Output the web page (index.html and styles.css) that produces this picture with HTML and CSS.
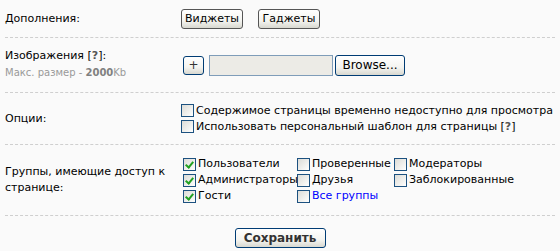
FILE: index.html
```html
<!DOCTYPE html>
<html lang="ru">
<head>
<meta charset="utf-8">
<link rel="stylesheet" href="styles.css">
</head>
<body>
<div class="form">
  <div class="row row-addons">
    <div class="label">Дополнения:</div>
    <div class="field buttons">
      <button class="btn btn-gray">Виджеты</button>
      <button class="btn btn-gray">Гаджеты</button>
    </div>
  </div>
  <div class="row row-images">
    <div class="label">
      <div>Изображения [<b class="q">?</b>]:</div>
      <div class="hint">Макс. размер - <b>2000</b>Kb</div>
    </div>
    <div class="field upload">
      <button class="btn btn-blue btn-plus">+</button>
      <span class="file-input"></span>
      <button class="btn btn-blue btn-browse">Browse...</button>
    </div>
  </div>
  <div class="row row-options">
    <div class="label">Опции:</div>
    <div class="field list">
      <label class="cb"><span class="box"></span>Содержимое страницы временно недоступно для просмотра</label>
      <label class="cb"><span class="box"></span>Использовать персональный шаблон для страницы [<b class="q">?</b>]</label>
    </div>
  </div>
  <div class="row row-groups">
    <div class="label">Группы, имеющие доступ к странице:</div>
    <div class="field groups">
      <label class="cb"><span class="box on"></span>Пользователи</label>
      <label class="cb"><span class="box"></span>Проверенные</label>
      <label class="cb"><span class="box"></span>Модераторы</label>
      <label class="cb"><span class="box on"></span>Администраторы</label>
      <label class="cb"><span class="box"></span>Друзья</label>
      <label class="cb"><span class="box"></span>Заблокированные</label>
      <label class="cb"><span class="box on"></span>Гости</label>
      <label class="cb link"><span class="box"></span>Все группы</label>
    </div>
  </div>
  <div class="row-save">
    <button class="btn btn-blue btn-save">Сохранить</button>
  </div>
</div>
</body>
</html>
```
FILE: styles.css
```css
html, body {
  margin: 0;
  padding: 0;
  background: #fafafa;
}
body {
  font-family: "DejaVu Sans", Verdana, sans-serif;
  font-size: 11px;
  color: #000;
}
.form {
  padding: 0 5px;
}
.row {
  display: flex;
  align-items: center;
  border-bottom: 1px dashed #cfcfcf;
}
.label {
  width: 176px;
  flex: none;
  line-height: 16px;
}
.field {
  flex: 1;
}
.row-addons {
  height: 37px;
}
.buttons {
  display: flex;
  gap: 15px;
}
.row-images {
  height: 54px;
}
.row-options {
  height: 51px;
}
.row-groups {
  height: 70px;
}
.hint {
  color: #999;
  font-size: 10px;
  line-height: 18px;
}
.hint b {
  color: #808080;
}
.q {
  color: #555;
}
.btn {
  font-family: "DejaVu Sans", Verdana, sans-serif;
  font-size: 11px;
  color: #000;
  height: 20px;
  padding: 0 7px;
  border-radius: 3px;
  background: linear-gradient(#ffffff 0%, #f4f4f0 60%, #d8d8d0 100%);
  cursor: pointer;
}
.btn-gray {
  border: 1px solid #555;
  width: 62px;
  padding: 0;
}
.btn-blue {
  border: 1px solid #003c74;
}
.upload {
  display: flex;
  align-items: center;
  padding-left: 2px;
}
.btn-plus {
  width: 21px;
  padding: 0;
  height: 19px;
  font-size: 12px;
  color: #333;
  margin-right: 5px;
}
.file-input {
  width: 122px;
  height: 19px;
  border: 1px solid #7f9db9;
  background: #ecebe6;
  margin-right: 2px;
}
.btn-browse {
  width: 70px;
  height: 21px;
  padding: 0;
  font-size: 12px;
}
.list {
  display: flex;
  flex-direction: column;
}
.cb {
  display: flex;
  align-items: center;
  line-height: 16px;
  white-space: nowrap;
}
.box {
  width: 11px;
  height: 11px;
  border: 1px solid #1c5180;
  background: linear-gradient(135deg, #dcdcd7 0%, #f4f4f2 70%, #ffffff 100%);
  margin-right: 2px;
  flex: none;
  position: relative;
}
.box.on::after {
  content: "";
  position: absolute;
  left: 3px;
  top: 1px;
  width: 3px;
  height: 6px;
  border: solid #21a121;
  border-width: 0 2px 2px 0;
  transform: rotate(40deg);
}
.groups {
  display: grid;
  grid-template-columns: 114px 97px auto;
  padding-left: 2px;
}
.link {
  color: #0000ff;
}
.row-save {
  display: flex;
  justify-content: center;
  padding-top: 12px;
}
.btn-save {
  width: 91px;
  height: 20px;
  font-size: 12px;
  font-weight: bold;
  color: #333;
  padding: 0;
}
```
